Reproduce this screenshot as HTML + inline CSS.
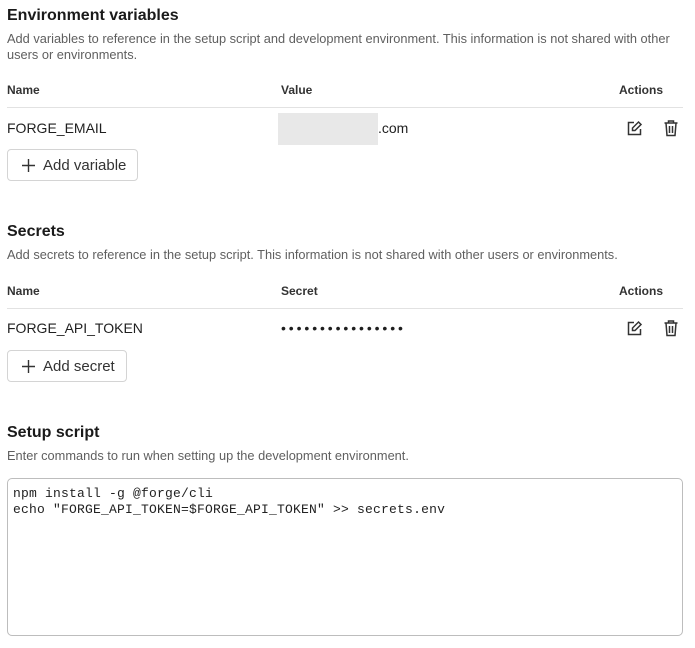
<!DOCTYPE html>
<html><head><style>
*{box-sizing:border-box;margin:0;padding:0}
body{width:695px;height:648px;background:#fff;font-family:"Liberation Sans",sans-serif;color:#1f1f1f;position:relative;overflow:hidden}
.a{position:absolute;white-space:nowrap}
h2{position:absolute;font-size:16px;font-weight:bold;left:7px;color:#1a1a1a}
.d{font-size:12.8px;color:#5f5f5f;line-height:16px}
.th{font-size:12px;font-weight:bold;color:#333}
.line{position:absolute;left:7px;width:676px;height:1px;background:#e2e2e2}
.td{font-size:14px;color:#1f1f1f}
.btn{position:absolute;left:7px;height:32px;border:1px solid #d4d4d4;border-radius:4px;font-size:15px;color:#333;display:flex;align-items:center;padding-left:14px;gap:8px}
.ta{position:absolute;left:7px;top:478px;width:676px;height:158px;border:1px solid #bdbdbd;border-radius:5px;font-family:"Liberation Mono",monospace;font-size:13px;letter-spacing:0.2px;line-height:16px;padding:7px 5px;color:#222;white-space:pre}
</style></head><body>
<h2 style="top:7px">Environment variables</h2>
<div class="a d" style="left:7px;top:31px">Add variables to reference in the setup script and development environment. This information is not shared with other<br>users or environments.</div>
<div class="a th" style="left:7px;top:83px">Name</div>
<div class="a th" style="left:281px;top:83px">Value</div>
<div class="a th" style="left:619px;top:83px">Actions</div>
<div class="line" style="top:107px"></div>
<div class="a td" style="left:7px;top:120px">FORGE_EMAIL</div>
<div class="a" style="left:278px;top:113px;width:100px;height:32px;background:#e8e8e8"></div>
<div class="a td" style="left:378px;top:120px">.com</div>
<svg class="a" style="left:626px;top:120px" width="17" height="17" viewBox="0 0 17 17" fill="none" stroke="#333" stroke-width="1.5"><path d="M8 2.5H2.5v12h12V9"/><path d="M12.5 2l2.5 2.5L9 10.5H6.5V8z"/></svg>
<svg class="a" style="left:663px;top:119px" width="16" height="18" viewBox="0 0 16 18" fill="none" stroke="#333" stroke-width="1.5"><path d="M1.5 4h13M5.5 4V2h5v2M3 4l1 12.5h8L13 4M6.5 7v7M9.5 7v7"/></svg>
<div class="btn" style="top:149px;width:131px"><svg width="13" height="13" viewBox="0 0 13 13" stroke="#333" stroke-width="1.4"><path d="M6.5 0v13M0 6.5h13"/></svg>Add variable</div>

<h2 style="top:223px">Secrets</h2>
<div class="a d" style="left:7px;top:247px">Add secrets to reference in the setup script. This information is not shared with other users or environments.</div>
<div class="a th" style="left:7px;top:284px">Name</div>
<div class="a th" style="left:281px;top:284px">Secret</div>
<div class="a th" style="left:619px;top:284px">Actions</div>
<div class="line" style="top:308px"></div>
<div class="a td" style="left:7px;top:320px">FORGE_API_TOKEN</div>
<div class="a td" style="left:281px;top:320px;letter-spacing:2.9px">••••••••••••••••</div>
<svg class="a" style="left:626px;top:320px" width="17" height="17" viewBox="0 0 17 17" fill="none" stroke="#333" stroke-width="1.5"><path d="M8 2.5H2.5v12h12V9"/><path d="M12.5 2l2.5 2.5L9 10.5H6.5V8z"/></svg>
<svg class="a" style="left:663px;top:319px" width="16" height="18" viewBox="0 0 16 18" fill="none" stroke="#333" stroke-width="1.5"><path d="M1.5 4h13M5.5 4V2h5v2M3 4l1 12.5h8L13 4M6.5 7v7M9.5 7v7"/></svg>
<div class="btn" style="top:350px;width:120px"><svg width="13" height="13" viewBox="0 0 13 13" stroke="#333" stroke-width="1.4"><path d="M6.5 0v13M0 6.5h13"/></svg>Add secret</div>

<h2 style="top:424px">Setup script</h2>
<div class="a d" style="left:7px;top:448px">Enter commands to run when setting up the development environment.</div>
<div class="ta">npm install -g @forge/cli
echo "FORGE_API_TOKEN=$FORGE_API_TOKEN" &gt;&gt; secrets.env</div>
</body></html>
